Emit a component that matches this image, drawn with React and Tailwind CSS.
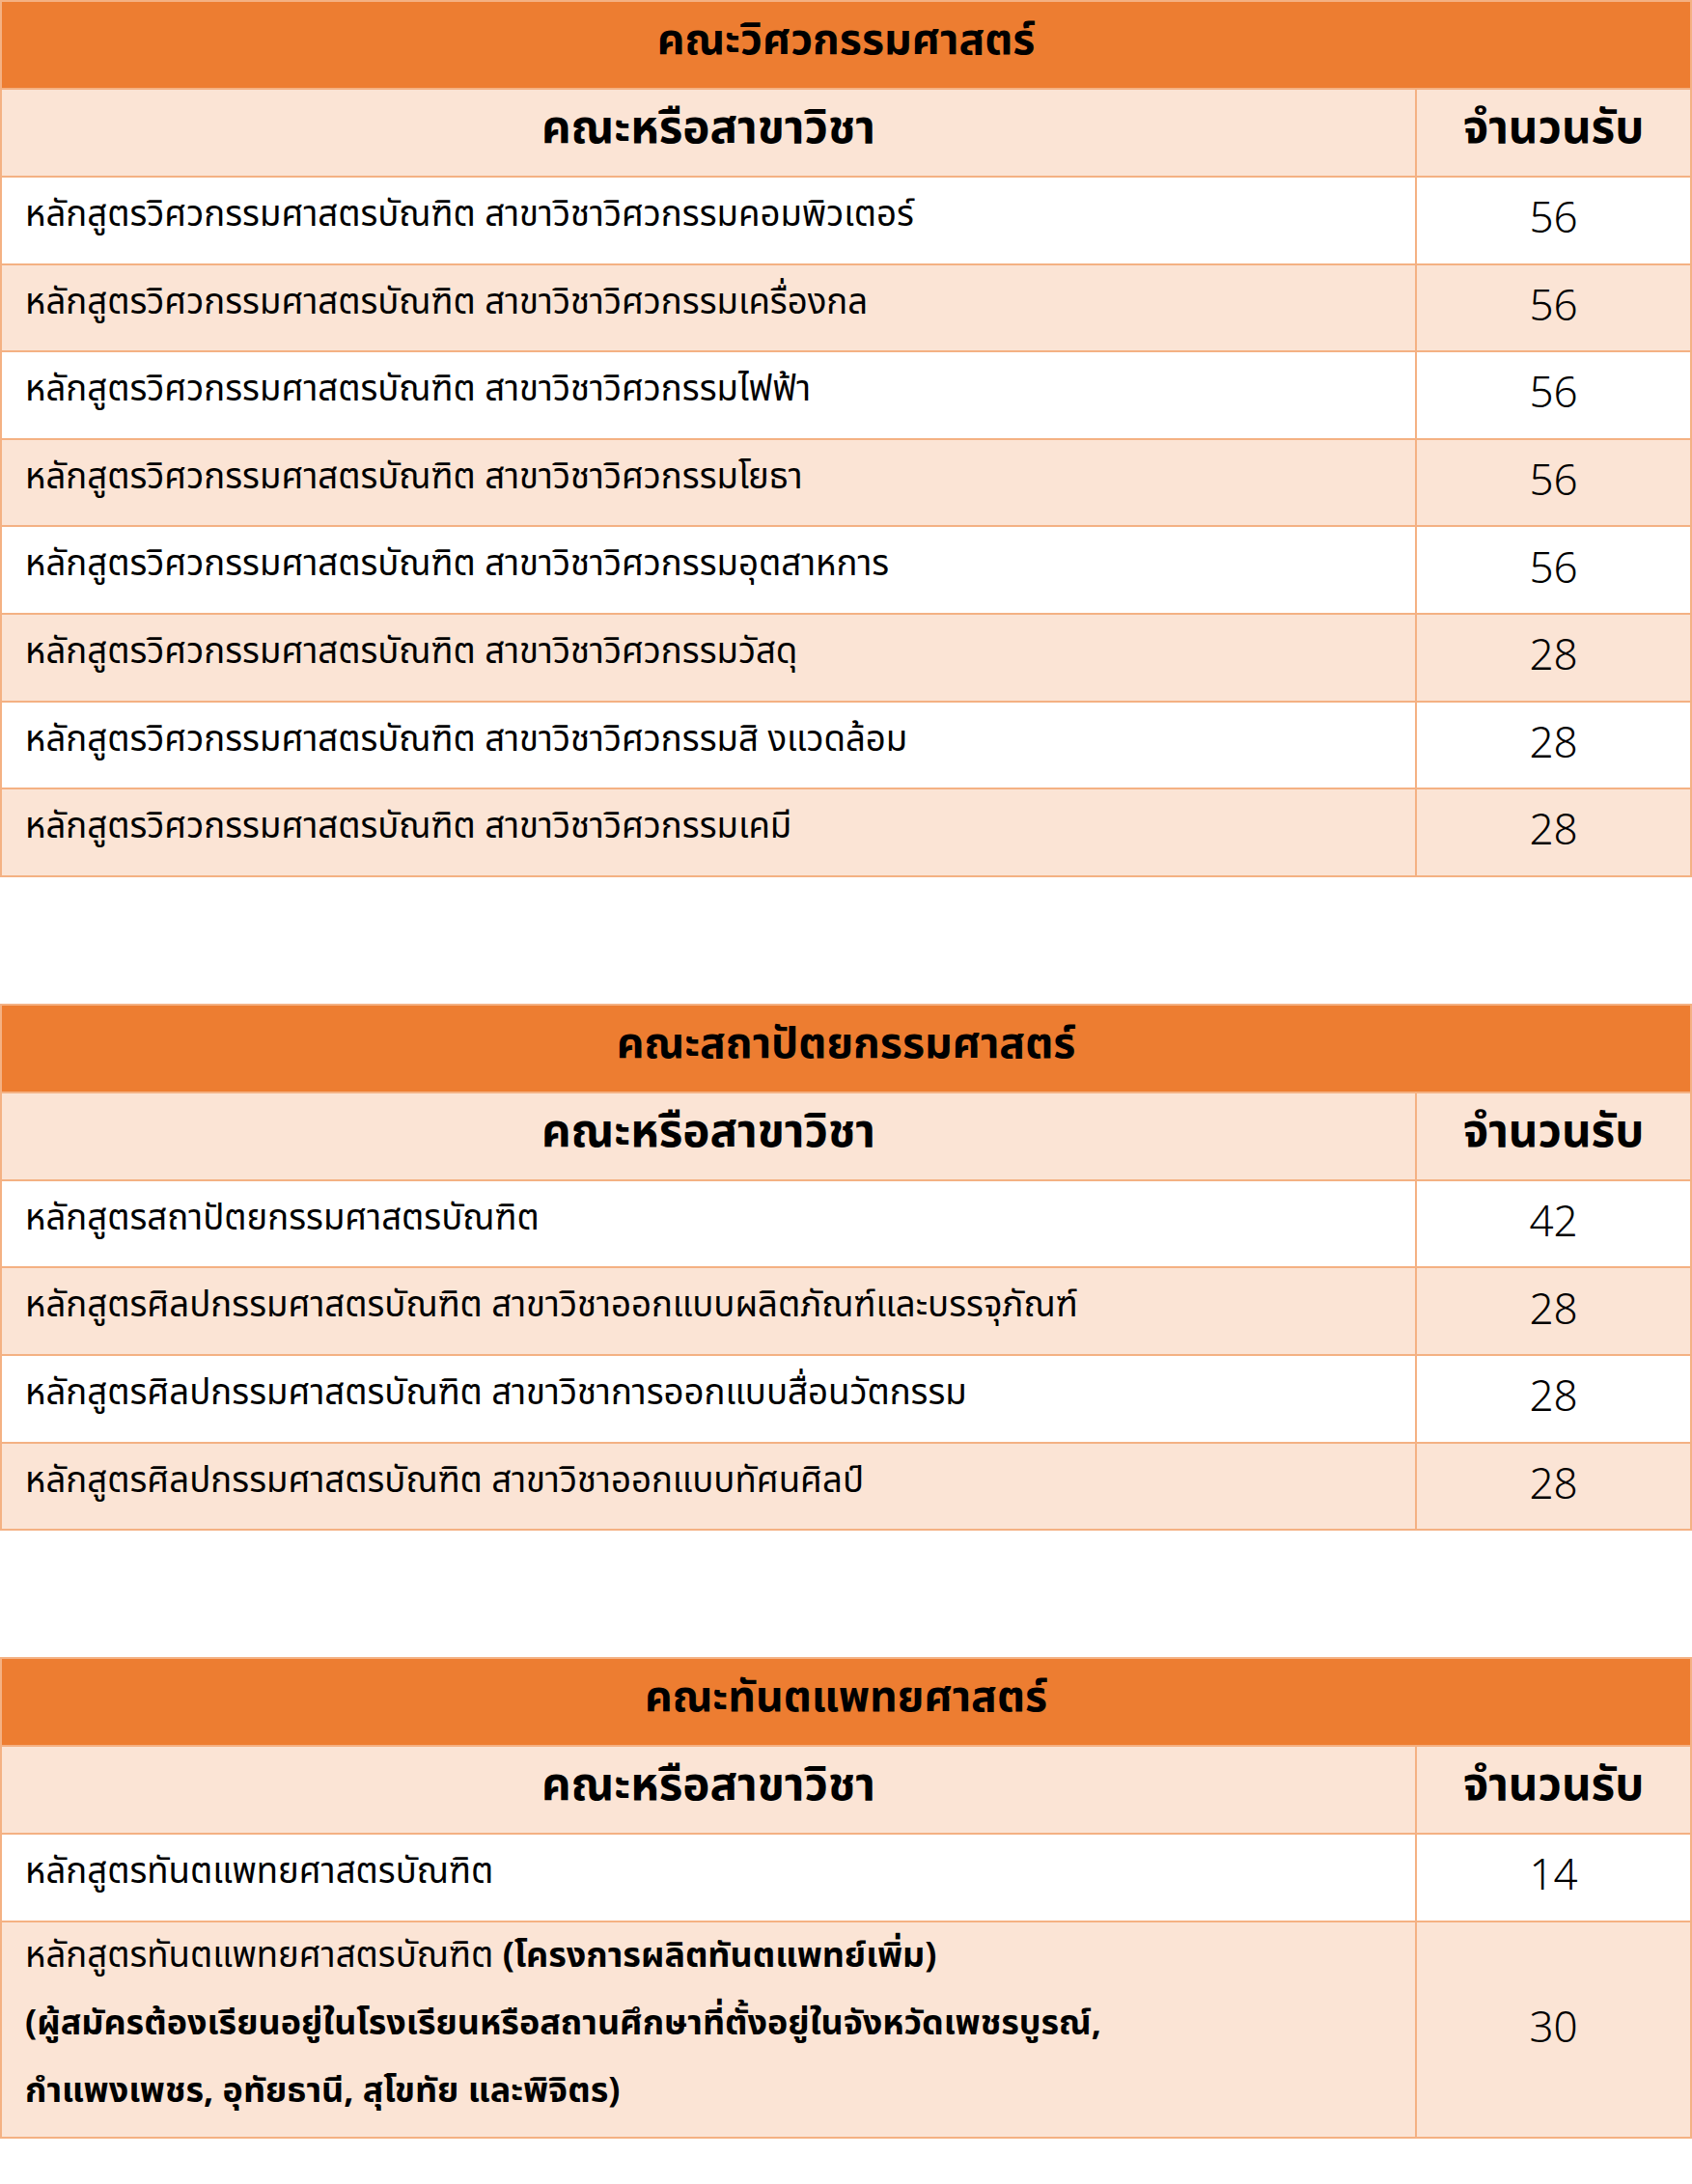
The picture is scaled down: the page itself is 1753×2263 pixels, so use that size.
import React from "react";

const thai = { fontFamily: '"Noto Sans Thai", "Noto Sans Thai UI", "Noto Sans", sans-serif' };

const tables = [
  {
    title: "คณะวิศวกรรมศาสตร์",
    rows: [
      { name: "หลักสูตรวิศวกรรมศาสตรบัณฑิต สาขาวิชาวิศวกรรมคอมพิวเตอร์", n: "56" },
      { name: "หลักสูตรวิศวกรรมศาสตรบัณฑิต สาขาวิชาวิศวกรรมเครื่องกล", n: "56" },
      { name: "หลักสูตรวิศวกรรมศาสตรบัณฑิต สาขาวิชาวิศวกรรมไฟฟ้า", n: "56" },
      { name: "หลักสูตรวิศวกรรมศาสตรบัณฑิต สาขาวิชาวิศวกรรมโยธา", n: "56" },
      { name: "หลักสูตรวิศวกรรมศาสตรบัณฑิต สาขาวิชาวิศวกรรมอุตสาหการ", n: "56" },
      { name: "หลักสูตรวิศวกรรมศาสตรบัณฑิต สาขาวิชาวิศวกรรมวัสดุ", n: "28" },
      { name: "หลักสูตรวิศวกรรมศาสตรบัณฑิต สาขาวิชาวิศวกรรมสิ งแวดล้อม", n: "28" },
      { name: "หลักสูตรวิศวกรรมศาสตรบัณฑิต สาขาวิชาวิศวกรรมเคมี", n: "28" },
    ],
  },
  {
    title: "คณะสถาปัตยกรรมศาสตร์",
    rows: [
      { name: "หลักสูตรสถาปัตยกรรมศาสตรบัณฑิต", n: "42" },
      { name: "หลักสูตรศิลปกรรมศาสตรบัณฑิต สาขาวิชาออกแบบผลิตภัณฑ์และบรรจุภัณฑ์", n: "28" },
      { name: "หลักสูตรศิลปกรรมศาสตรบัณฑิต สาขาวิชาการออกแบบสื่อนวัตกรรม", n: "28" },
      { name: "หลักสูตรศิลปกรรมศาสตรบัณฑิต สาขาวิชาออกแบบทัศนศิลป์", n: "28" },
    ],
  },
  {
    title: "คณะทันตแพทยศาสตร์",
    rows: [
      { name: "หลักสูตรทันตแพทยศาสตรบัณฑิต", n: "14" },
      { special: true, n: "30" },
    ],
  },
];

function Section({ title, rows }) {
  return (
    <table className="w-full border-collapse table-fixed">
      <colgroup>
        <col className="w-[1466px]" />
        <col />
      </colgroup>
      <tbody>
        <tr className="h-[91px]">
          <td
            colSpan={2}
            className="bg-[#ED7D31] border-2 border-[#F4B183] text-center align-middle font-bold text-[44.5px] leading-none text-black pb-[6px]"
            style={thai}
          >
            {title}
          </td>
        </tr>
        <tr className="h-[91px] bg-[#FBE4D5]">
          <td
            className="border-2 border-[#F4B183] text-center align-middle font-bold text-[47.5px] leading-none text-black pb-[8px]"
            style={thai}
          >
            คณะหรือสาขาวิชา
          </td>
          <td
            className="border-2 border-[#F4B183] text-center align-middle font-bold text-[47.5px] leading-none text-black pb-[8px]"
            style={thai}
          >
            จำนวนรับ
          </td>
        </tr>
        {rows.map((r, i) => (
          <tr
            key={i}
            className={
              (r.special ? "h-[219px] " : "h-[90.6px] ") +
              (i % 2 === 1 ? "bg-[#FBE4D5]" : "bg-white")
            }
          >
            {r.special ? (
              <td
                className="border-2 border-[#F4B183] align-middle pl-[24px] text-[36.6px] text-black leading-[70px] pt-0 pb-[12px]"
                style={thai}
              >
                <div>
                  หลักสูตรทันตแพทยศาสตรบัณฑิต{" "}
                  <span className="font-bold text-[35.9px]">(โครงการผลิตทันตแพทย์เพิ่ม)</span>
                </div>
                <div className="font-bold text-[35.9px]">
                  (ผู้สมัครต้องเรียนอยู่ในโรงเรียนหรือสถานศึกษาที่ตั้งอยู่ในจังหวัดเพชรบูรณ์,
                </div>
                <div className="font-bold text-[35.9px]">กำแพงเพชร, อุทัยธานี, สุโขทัย และพิจิตร)</div>
              </td>
            ) : (
              <td
                className="border-2 border-[#F4B183] align-middle pl-[24px] text-[36.6px] text-black leading-none pb-[10px]"
                style={thai}
              >
                {r.name}
              </td>
            )}
            <td
              className="border-2 border-[#F4B183] align-middle text-center text-[44px] font-light text-black leading-none pb-[8px]"
              style={{ fontFamily: '"Noto Sans", sans-serif' }}
            >
              {r.n}
            </td>
          </tr>
        ))}
      </tbody>
    </table>
  );
}

export default function App() {
  return (
    <div className="w-[1753px] min-h-[2263px] bg-white flex flex-col gap-[131px] pb-[56px]">
      {tables.map((t, i) => (
        <Section key={i} title={t.title} rows={t.rows} />
      ))}
    </div>
  );
}
